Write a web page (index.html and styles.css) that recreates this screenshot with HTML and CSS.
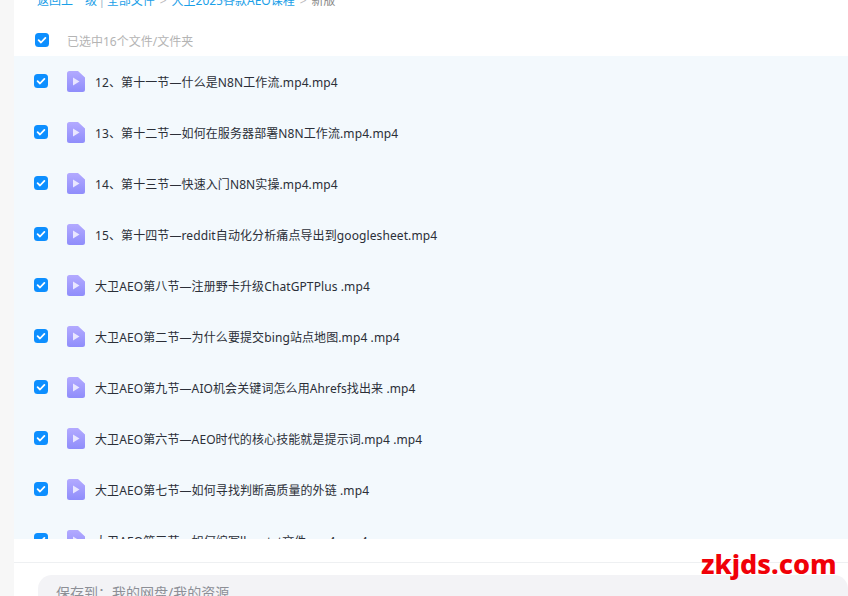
FILE: index.html
```html
<!DOCTYPE html>
<html lang="zh">
<head>
<meta charset="utf-8">
<title>保存文件</title>
<link rel="stylesheet" href="styles.css">
</head>
<body>
<svg class="defs" width="0" height="0" aria-hidden="true">
  <defs>
    <linearGradient id="fileGrad" x1="0" y1="0" x2="0" y2="1">
      <stop offset="0" stop-color="#b3aaff"/>
      <stop offset="1" stop-color="#8f8dfb"/>
    </linearGradient>
    <symbol id="check" viewBox="0 0 14 14">
      <rect width="14" height="14" rx="3.500" fill="#0d8fff"/>
      <path d="M3.600 7.200 6 9.500l4.400-4.600" fill="none" stroke="#fff" stroke-width="1.800" stroke-linecap="round" stroke-linejoin="round"/>
    </symbol>
    <symbol id="video" viewBox="0 0 18 21">
      <path d="M2.500 0H11l7 6.500v12A2.500 2.500 0 0 1 15.500 21h-13A2.500 2.500 0 0 1 0 18.500v-16A2.500 2.500 0 0 1 2.500 0z" fill="url(#fileGrad)"/>
      <path d="M6 6.500v8l6.500-4z" fill="#e9e6ff"/>
    </symbol>
  </defs>
</svg>
<main class="panel">
  <nav class="crumbs"><a>返回上一级</a><span class="bar">|</span><a>全部文件</a><span class="sep">&gt;</span><a>大卫2025各款AEO课程</a><span class="sep">&gt;</span><span class="current">新版</span></nav>
  <div class="select-all">
    <svg class="check"><use href="#check"/></svg>
    <span class="select-text">已选中16个文件/文件夹</span>
  </div>
  <ul class="files">
    <li class="file"><svg class="check"><use href="#check"/></svg><svg class="video"><use href="#video"/></svg><span class="name">12、第十一节—什么是N8N工作流.mp4.mp4</span></li>
    <li class="file"><svg class="check"><use href="#check"/></svg><svg class="video"><use href="#video"/></svg><span class="name">13、第十二节—如何在服务器部署N8N工作流.mp4.mp4</span></li>
    <li class="file"><svg class="check"><use href="#check"/></svg><svg class="video"><use href="#video"/></svg><span class="name">14、第十三节—快速入门N8N实操.mp4.mp4</span></li>
    <li class="file"><svg class="check"><use href="#check"/></svg><svg class="video"><use href="#video"/></svg><span class="name">15、第十四节—reddit自动化分析痛点导出到googlesheet.mp4</span></li>
    <li class="file"><svg class="check"><use href="#check"/></svg><svg class="video"><use href="#video"/></svg><span class="name">大卫AEO第八节—注册野卡升级ChatGPTPlus .mp4</span></li>
    <li class="file"><svg class="check"><use href="#check"/></svg><svg class="video"><use href="#video"/></svg><span class="name">大卫AEO第二节—为什么要提交bing站点地图.mp4 .mp4</span></li>
    <li class="file"><svg class="check"><use href="#check"/></svg><svg class="video"><use href="#video"/></svg><span class="name">大卫AEO第九节—AIO机会关键词怎么用Ahrefs找出来 .mp4</span></li>
    <li class="file"><svg class="check"><use href="#check"/></svg><svg class="video"><use href="#video"/></svg><span class="name">大卫AEO第六节—AEO时代的核心技能就是提示词.mp4 .mp4</span></li>
    <li class="file"><svg class="check"><use href="#check"/></svg><svg class="video"><use href="#video"/></svg><span class="name">大卫AEO第七节—如何寻找判断高质量的外链 .mp4</span></li>
    <li class="file"><svg class="check"><use href="#check"/></svg><svg class="video"><use href="#video"/></svg><span class="name">大卫AEO第三节—如何编写llms.txt文件.mp4 .mp4</span></li>
  </ul>
  <footer class="footer">
    <div class="save-to"><span class="save-label">保存到：</span><span class="save-path">我的网盘/我的资源</span></div>
  </footer>
</main>
<div class="watermark">zkjds.com</div>
</body>
</html>
```

FILE: styles.css
```css
* { box-sizing: border-box; }
html, body { height: 100%; }
body {
  margin: 0;
  height: 596px;
  overflow: hidden;
  background: #f7f7f7;
  font-family: "Noto Sans", "Noto Sans CJK SC", sans-serif;
  padding-left: 14px;
  position: relative;
}
.defs { position: absolute; }
.panel {
  height: 596px;
  background: #fff;
  display: flex;
  flex-direction: column;
  overflow: hidden;
}
.crumbs {
  height: 18px;
  margin-top: -9px;
  margin-bottom: 15px;
  padding-left: 23px;
  display: flex;
  align-items: center;
  font-size: 12px;
  color: #1aa0e8;
  flex: none;
  white-space: pre;
}
.bar { margin: 0 1.500px; color: #9fb8c8; }
.sep { margin: 0 5px; color: #bbb; }
.current { color: #888; }
.select-all {
  height: 32px;
  flex: none;
  display: flex;
  align-items: center;
  padding-left: 21px;
  padding-top: 2px;
}
.select-text { margin-left: 18px; font-size: 12px; color: #b4b4b4; }
.check { width: 14px; height: 14px; flex: none; position: relative; top: -1px; }
.files {
  list-style: none;
  margin: 0;
  padding: 0;
  background: #f3f9fd;
  height: 483px;
  overflow: hidden;
  flex: none;
}
.file {
  height: 51px;
  display: flex;
  align-items: center;
  padding-left: 20px;
}
.video { width: 18px; height: 21px; margin-left: 19px; flex: none; }
.name { margin-left: 10px; font-size: 12px; letter-spacing: 0.100px; color: #2b2f38; white-space: nowrap; }
.footer {
  flex: none;
  margin-top: 23px;
  border-top: 1px solid #eef0f2;
  padding: 12px 0 0 24px;
}
.save-to {
  height: 60px;
  border-radius: 14px;
  background: #f3f3f6;
  padding: 7px 0 0 18px;
  font-size: 14px;
  color: #8d8f96;
}
.watermark {
  position: absolute;
  left: 701px;
  top: 545px;
  font-family: "Noto Sans", "Open Sans", sans-serif;
  font-weight: 800;
  font-size: 27px;
  line-height: 38px;
  color: #f00008;
  white-space: nowrap;
}
```
